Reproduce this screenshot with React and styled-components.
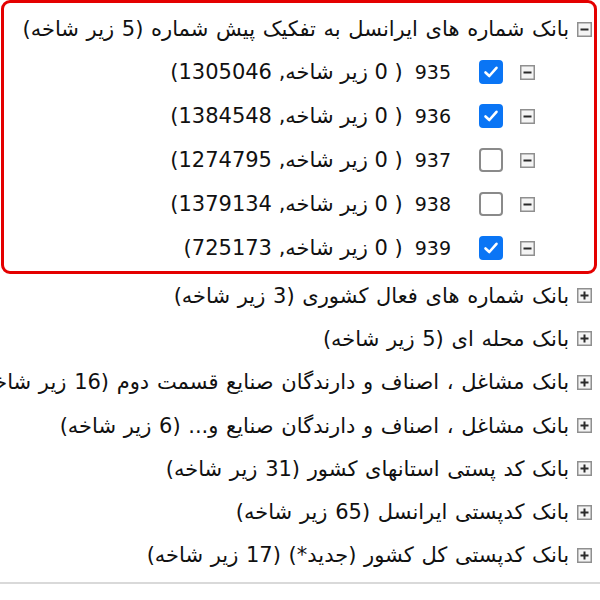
import React from "react";
import styled, { createGlobalStyle } from "styled-components";

const GlobalStyle = createGlobalStyle`
    body {
        margin: 0;
        background: #ffffff;
        font-family: "DejaVu Sans", "Noto Sans", sans-serif;
        color: #111111;
    }
`;

const Page = styled.div`
    direction: rtl;
    width: 600px;
    height: 600px;
    overflow: hidden;
    font-size: 21px;
`;

const Selected = styled.div`
    margin: 0 3px 0 1px;
    border: 3px solid #e40000;
    border-radius: 9px;
    padding: 5px 0 1px;
`;

const Row = styled.div`
    display: flex;
    align-items: center;
    height: ${(p) => p.h}px;
    padding-right: ${(p) => p.indent}px;
    white-space: nowrap;
`;

const Label = styled.span`
    margin-right: 8px;
    word-spacing: 1px;
`;

const Number = styled.span`
    margin-right: 28px;
    font-size: 19px;
`;

const Count = styled.span`
    margin-right: 12px;
`;

const ToggleBox = styled.svg`
    flex: none;
    width: 15px;
    height: 15px;
`;

const Check = styled.span`
    flex: none;
    box-sizing: border-box;
    width: 24px;
    height: 24px;
    margin-right: 17px;
    border-radius: 4px;
    display: flex;
    align-items: center;
    justify-content: center;
    background: ${(p) => (p.checked ? "#0a75f5" : "#ffffff")};
    border: 2px solid ${(p) => (p.checked ? "#0a75f5" : "#8a8a8a")};
`;

const Divider = styled.div`
    margin-top: 5px;
    border-top: 2px solid #d9d9d9;
`;

const Toggle = ({ open }) => (
    <ToggleBox viewBox="0 0 15 15">
        <rect x="0.75" y="0.75" width="13.5" height="13.5" fill="#f4f4f4" stroke="#8f8f8f" strokeWidth="1.5" />
        <rect x="3.5" y="6.5" width="8" height="2" fill="#2a2a2a" />
        {!open && <rect x="6.5" y="3.5" width="2" height="8" fill="#2a2a2a" />}
    </ToggleBox>
);

const children = [
    { code: "935", total: "1305046", checked: true },
    { code: "936", total: "1384548", checked: true },
    { code: "937", total: "1274795", checked: false },
    { code: "938", total: "1379134", checked: false },
    { code: "939", total: "725173", checked: true },
];

const banks = [
    "بانک شماره های فعال کشوری (3 زیر شاخه)",
    "بانک محله ای (5 زیر شاخه)",
    "بانک مشاغل ، اصناف و دارندگان صنایع قسمت دوم (16 زیر شاخه)",
    "بانک مشاغل ، اصناف و دارندگان صنایع و... (6 زیر شاخه)",
    "بانک کد پستی استانهای کشور (31 زیر شاخه)",
    "بانک کدپستی ایرانسل (65 زیر شاخه)",
    "بانک کدپستی کل کشور (جدید*) (17 زیر شاخه)",
];

export default function App() {
    return (
        <Page>
            <GlobalStyle />
            <Selected>
                <Row h={42} indent={2}>
                    <Toggle open />
                    <Label>بانک شماره های ایرانسل به تفکیک پیش شماره (5 زیر شاخه)</Label>
                </Row>
                {children.map((c) => (
                    <Row key={c.code} h={44} indent={59}>
                        <Toggle open />
                        <Check checked={c.checked}>
                            {c.checked && (
                                <svg width="16" height="16" viewBox="0 0 16 16">
                                    <path d="M2.5 8.5 L6.3 12 L13.5 3.8" fill="none" stroke="#fff" strokeWidth="2.6" strokeLinecap="round" strokeLinejoin="round" />
                                </svg>
                            )}
                        </Check>
                        <Number>{c.code}</Number>
                        <Count>( 0  زیر شاخه, {c.total})</Count>
                    </Row>
                ))}
            </Selected>
            {banks.map((b) => (
                <Row key={b} h={43.3} indent={8}>
                    <Toggle />
                    <Label>{b}</Label>
                </Row>
            ))}
            <Divider />
        </Page>
    );
}
